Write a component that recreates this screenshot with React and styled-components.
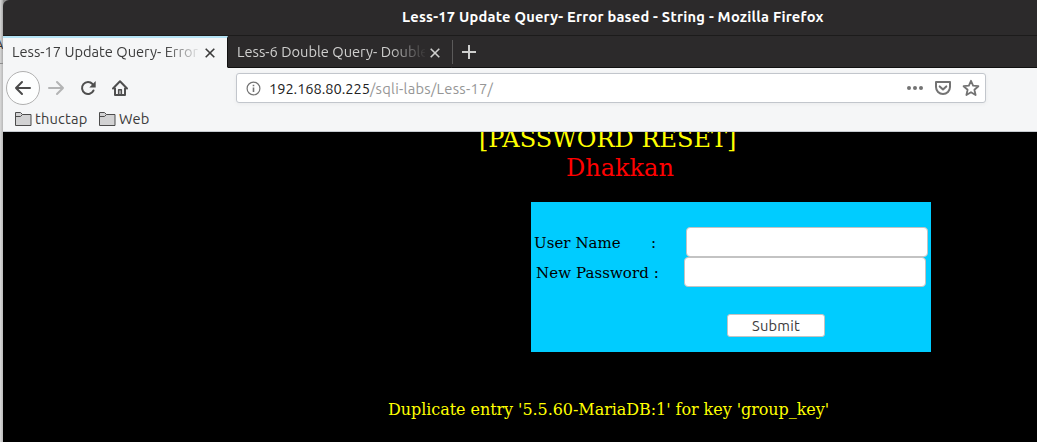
import React from 'react';
import styled, { createGlobalStyle } from 'styled-components';

const GlobalStyle = createGlobalStyle`
  * { box-sizing: border-box; }
  body { margin: 0; background: #000; overflow: hidden; }
`;

const uiFont = '"Ubuntu", "Noto Sans", "Open Sans", sans-serif';
const pageFont = '"DejaVu Serif", serif';

const Screen = styled.div`
  display: flex;
  width: 1037px;
  height: 442px;
  overflow: hidden;
  background: linear-gradient(#8e8e8e, #d0d0d0 60px);
`;

const Backdrop = styled.div`
  flex: none;
  width: 3px;
  height: 442px;
  overflow: hidden;
  background: linear-gradient(90deg, #dadada, #b8b8b8);
`;

const BackdropHeader = styled.div`
  height: 64px;
  padding-top: 36px;
  border-bottom: 1px solid #8d8d8d;
  background: linear-gradient(90deg, #d8d8d8, #aaa);
  color: #333;
  font: 13px/16px ${uiFont};
  text-indent: -5px;
`;

const Window = styled.div`
  display: flex;
  flex-direction: column;
  flex: 1;
  min-width: 0;
  border-top-left-radius: 6px;
  overflow: hidden;
  background: #2c2a2b;
`;

const TitleBar = styled.header`
  flex: none;
  height: 36px;
  padding-left: 399px;
  border-bottom: 1px solid #1c1b1b;
  color: #fff;
  font: 700 14.67px/34px ${uiFont};
  letter-spacing: ${(p) => p.$tracking}px;
  white-space: nowrap;
`;

const TabStrip = styled.nav`
  display: flex;
  flex: none;
  height: 32px;
`;

const Tab = styled.div`
  display: flex;
  align-items: center;
  width: ${(p) => (p.$active ? 225 : 224)}px;
  height: 32px;
  padding: 0 10px 0 9px;
  border-top: 2px solid ${(p) => (p.$active ? '#b5e3f5' : 'transparent')};
  border-bottom: 1px solid ${(p) => (p.$active ? '#f5f6f7' : '#111')};
  border-right: 1px solid ${(p) => (p.$active ? '#111' : 'transparent')};
  background: ${(p) => (p.$active ? '#f5f6f7' : 'transparent')};
  color: ${(p) => (p.$active ? '#3b3b3b' : '#cfcfce')};
`;

const TabLabel = styled.span`
  width: 188px;
  margin-top: -2px;
  overflow: hidden;
  white-space: nowrap;
  font: 14.67px/28px ${uiFont};
  letter-spacing: ${(p) => p.$tracking}px;
  mask-image: linear-gradient(90deg, #000 152px, transparent 190px);
`;

const TabClose = styled.svg`
  flex: none;
  width: 12px;
  height: 12px;
  margin-left: 4px;
`;

const NewTab = styled.div`
  display: flex;
  flex: 1;
  align-items: center;
  border-bottom: 1px solid #111;
  padding-left: 9px;
  &::before {
    content: '';
    width: 1px;
    height: 24px;
    margin-left: -9px;
    margin-right: 9px;
    background: #5b5a5a;
  }
`;

const Toolbar = styled.div`
  flex: none;
  height: 64px;
  border-bottom: 1px solid #c6cad0;
  background: #f5f6f7;
`;

const NavRow = styled.div`
  display: flex;
  align-items: center;
  height: 40px;
  padding-left: 3px;
`;

const BackButton = styled.div`
  display: flex;
  align-items: center;
  justify-content: center;
  width: 34px;
  height: 34px;
  border: 1px solid #b0b0b0;
  border-radius: 50%;
  background: #fdfefe;
`;

const NavIcon = styled.svg`
  flex: none;
  width: 18px;
  height: 18px;
  margin-left: ${(p) => p.$gap || 0}px;
`;

const AddressBar = styled.div`
  display: flex;
  align-items: center;
  width: 750px;
  height: 30px;
  margin-left: 107px;
  padding: 0 5px 0 9px;
  border: 1px solid #c2c6cc;
  border-radius: 3px;
  background: #fff;
  box-shadow: 0 1px 4px rgba(0, 0, 0, 0.05);
`;

const Address = styled.span`
  flex: 1;
  margin-left: 8px;
  margin-top: 1px;
  color: #969696;
  font: 14.67px/28px ${uiFont};
  letter-spacing: ${(p) => p.$tracking}px;
  b { color: #222; font-weight: 400; letter-spacing: -0.06px; }
`;

const BookmarkRow = styled.div`
  display: flex;
  height: 22px;
  padding-left: 12px;
`;

const Bookmark = styled.div`
  display: flex;
  align-items: center;
  width: ${(p) => p.$width}px;
  color: #3b3b3b;
  font: 14.67px/20px ${uiFont};
  letter-spacing: ${(p) => p.$tracking}px;
  svg { width: 17px; height: 16px; margin-right: 3px; }
`;

const Page = styled.main`
  flex: 1;
  overflow: hidden;
  background: #000;
  font-family: ${pageFont};
`;

const Heading = styled.div`
  height: 28px;
  margin-top: -7px;
  padding-left: 476px;
  color: #ff0;
  font-size: 24px;
  line-height: 28px;
  white-space: nowrap;
`;

const SubHeading = styled.div`
  height: 28px;
  padding-left: 563px;
  color: #f00;
  font-size: 24px;
  line-height: 30px;
`;

const ResetForm = styled.form`
  width: 400px;
  height: 150px;
  margin: 21px 0 0 528px;
  padding-top: 25px;
  background: #0cf;
  color: #000;
`;

const Field = styled.label`
  display: flex;
  height: 30px;
  padding-left: ${(p) => p.$inset}px;
  font-size: 15px;
  line-height: 33px;
  white-space: pre;
`;

const Caption = styled.span`
  width: ${(p) => p.$width}px;
  letter-spacing: ${(p) => p.$tracking || 0}px;
`;

const Input = styled.input`
  width: 242px;
  height: 30px;
  padding: 0 6px;
  border: 1px solid #c3c3c3;
  border-radius: 4px;
  background: #fff;
  outline: none;
`;

const Submit = styled.button`
  display: block;
  width: 98px;
  height: 23px;
  margin: 27px 0 0 196px;
  padding: 0;
  border: 1px solid #c3c3c3;
  border-radius: 3px;
  background: #fff;
  color: #3b3b3b;
  font: 14.67px/20px ${uiFont};
  letter-spacing: 0.2px;
`;

const Message = styled.p`
  margin: 47px 0 0 385px;
  color: #ff0;
  font-size: 16px;
  line-height: 22px;
  letter-spacing: -0.06px;
  white-space: nowrap;
`;

const Cross = () => (
  <TabClose viewBox="0 0 12 12" fill="none" stroke="currentColor" strokeWidth="1.6">
    <path d="M1.7 1.7l8.6 8.6M10.3 1.7l-8.6 8.6" />
  </TabClose>
);

const Folder = () => (
  <svg viewBox="0 0 17 16" fill="#d2d2d3" stroke="#4c4c4c" strokeLinejoin="round">
    <path d="M.5 14.5V1.5h5l2 2h8.5v11z" />
    <path d="M.5 5.5h5l2-2" fill="none" />
  </svg>
);

export default function App() {
  return (
    <Screen>
      <GlobalStyle />
      <Backdrop><BackdropHeader>A</BackdropHeader></Backdrop>
      <Window>
        <TitleBar $tracking={0.23}>Less-17 Update Query- Error based - String - Mozilla Firefox</TitleBar>
        <TabStrip>
          <Tab $active>
            <TabLabel $tracking={0}>Less-17 Update Query- Error based</TabLabel>
            <Cross />
          </Tab>
          <Tab>
            <TabLabel $tracking={0}>Less-6 Double Query- Double Quotes</TabLabel>
            <Cross />
          </Tab>
          <NewTab>
            <svg width="14" height="14" viewBox="0 0 14 14" stroke="#cfcfce" strokeWidth="2">
              <path d="M7 0v14M0 7h14" />
            </svg>
          </NewTab>
        </TabStrip>
        <Toolbar>
          <NavRow>
            <BackButton>
              <NavIcon viewBox="0 0 18 18" fill="none" stroke="#4a4a4a" strokeWidth="2" strokeLinecap="round" strokeLinejoin="round">
                <path d="M16 9H2M8 3L2 9l6 6" />
              </NavIcon>
            </BackButton>
            <NavIcon $gap={7} viewBox="0 0 18 18" fill="none" stroke="#b3b4b5" strokeWidth="2" strokeLinecap="round" strokeLinejoin="round">
              <path d="M2 9h14M10 3l6 6-6 6" />
            </NavIcon>
            <NavIcon $gap={14} viewBox="0 0 18 18" fill="none" stroke="#4f4f4f" strokeWidth="2" strokeLinecap="round">
              <path d="M14.5 11.5A6 6 0 1 1 13.5 5" />
              <path d="M16.7 2v6.4H10.3z" fill="#4f4f4f" stroke="none" />
            </NavIcon>
            <NavIcon $gap={14} viewBox="0 0 18 18" fill="none" stroke="#4f4f4f" strokeWidth="2" strokeLinecap="round" strokeLinejoin="round">
              <path d="M2 9.5L9 2.3l7 7.2M4 9.5V16h10V9.5" />
              <path d="M7.7 15.5v-4.7h2.6v4.7" strokeWidth="1.6" />
            </NavIcon>
            <AddressBar>
              <svg width="15" height="15" viewBox="0 0 15 15" fill="none" stroke="#737373">
                <circle cx="7.5" cy="7.5" r="6.4" strokeWidth="1.2" />
                <path d="M7.5 6.5V11M7.5 3.7v1.6" strokeWidth="1.6" />
              </svg>
              <Address $tracking={0.28}><b>192.168.80.225</b>/sqli-labs/Less-17/</Address>
              <svg width="16" height="16" viewBox="0 0 16 16" fill="#737373">
                <circle cx="2" cy="8" r="2" /><circle cx="8" cy="8" r="2" /><circle cx="14" cy="8" r="2" />
              </svg>
              <NavIcon $gap={11} viewBox="0 0 18 18" fill="none" stroke="#737373" strokeWidth="2" strokeLinecap="round" strokeLinejoin="round">
                <path d="M2 3h14v5a7 7 0 0 1-14 0z" />
                <path d="M5.7 7.4L9 10.5l3.3-3.1" />
              </NavIcon>
              <NavIcon $gap={10} viewBox="0 0 18 18" fill="none" stroke="#737373" strokeWidth="1.8" strokeLinejoin="round">
                <path d="M9 1.8l2.1 4.9 5.3.5-4 3.5 1.2 5.3L9 13.2 4.4 16l1.2-5.3-4-3.5 5.3-.5z" />
              </NavIcon>
            </AddressBar>
          </NavRow>
          <BookmarkRow>
            <Bookmark $width={84} $tracking={0.2}><Folder />thuctap</Bookmark>
            <Bookmark $width={60} $tracking={0.2}><Folder />Web</Bookmark>
          </BookmarkRow>
        </Toolbar>
        <Page>
          <Heading>[PASSWORD RESET]</Heading>
          <SubHeading>Dhakkan</SubHeading>
          <ResetForm onSubmit={(e) => e.preventDefault()}>
            <Field $inset={3}>
              <Caption $width={117} $tracking={0.05}>User Name</Caption>
              <Caption $width={35}>:</Caption>
              <Input />
            </Field>
            <Field $inset={5}>
              <Caption $width={148} $tracking={0.07}>New Password :</Caption>
              <Input type="password" />
            </Field>
            <Submit>Submit</Submit>
          </ResetForm>
          <Message>Duplicate entry '5.5.60-MariaDB:1' for key 'group_key'</Message>
        </Page>
      </Window>
    </Screen>
  );
}
